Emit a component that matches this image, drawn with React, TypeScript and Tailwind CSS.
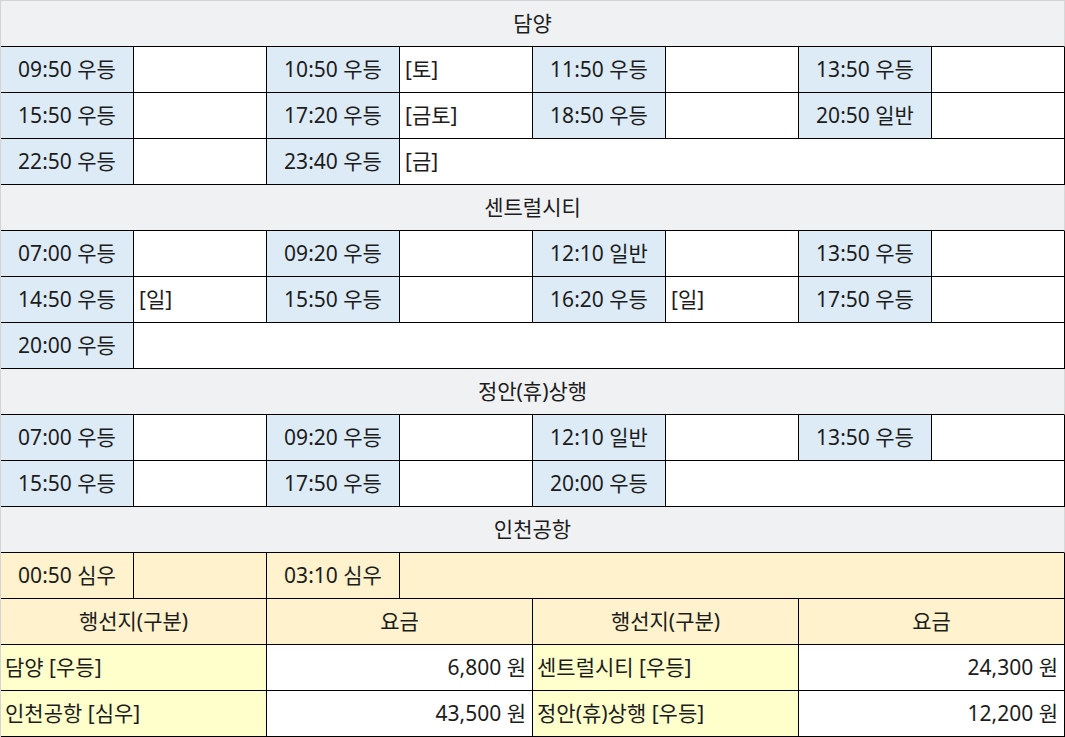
import { FC, ReactNode } from "react";

type Cell = {
  text?: string;
  span?: number;
  kind: "time" | "note" | "peach" | "yellow" | "fare";
};

const spanClass: Record<number, string> = {
  1: "col-span-1",
  2: "col-span-2",
  3: "col-span-3",
  5: "col-span-5",
  7: "col-span-7",
};

const kindClass: Record<Cell["kind"], string> = {
  time: "bg-[#ddebf7] justify-center",
  note: "bg-white justify-start pl-[5px]",
  peach: "bg-[#fff2cc] justify-center",
  yellow: "bg-[#ffffcc] justify-start pl-[4px]",
  fare: "bg-white justify-end pr-[6px]",
};

const t = (text: string): Cell => ({ text, kind: "time" });
const n = (text = "", span = 1): Cell => ({ text, kind: "note", span });

const sections: { title: string; rows: Cell[][] }[] = [
  {
    title: "담양",
    rows: [
      [t("09:50 우등"), n(), t("10:50 우등"), n("[토]"), t("11:50 우등"), n(), t("13:50 우등"), n()],
      [t("15:50 우등"), n(), t("17:20 우등"), n("[금토]"), t("18:50 우등"), n(), t("20:50 일반"), n()],
      [t("22:50 우등"), n(), t("23:40 우등"), n("[금]", 5)],
    ],
  },
  {
    title: "센트럴시티",
    rows: [
      [t("07:00 우등"), n(), t("09:20 우등"), n(), t("12:10 일반"), n(), t("13:50 우등"), n()],
      [t("14:50 우등"), n("[일]"), t("15:50 우등"), n(), t("16:20 우등"), n("[일]"), t("17:50 우등"), n()],
      [t("20:00 우등"), n("", 7)],
    ],
  },
  {
    title: "정안(휴)상행",
    rows: [
      [t("07:00 우등"), n(), t("09:20 우등"), n(), t("12:10 일반"), n(), t("13:50 우등"), n()],
      [t("15:50 우등"), n(), t("17:50 우등"), n(), t("20:00 우등"), n("", 3)],
    ],
  },
  {
    title: "인천공항",
    rows: [
      [
        { text: "00:50 심우", kind: "peach" },
        { kind: "peach" },
        { text: "03:10 심우", kind: "peach" },
        { kind: "peach", span: 5 },
      ],
      [
        { text: "행선지(구분)", kind: "peach", span: 2 },
        { text: "요금", kind: "peach", span: 2 },
        { text: "행선지(구분)", kind: "peach", span: 2 },
        { text: "요금", kind: "peach", span: 2 },
      ],
      [
        { text: "담양 [우등]", kind: "yellow", span: 2 },
        { text: "6,800 원", kind: "fare", span: 2 },
        { text: "센트럴시티 [우등]", kind: "yellow", span: 2 },
        { text: "24,300 원", kind: "fare", span: 2 },
      ],
      [
        { text: "인천공항 [심우]", kind: "yellow", span: 2 },
        { text: "43,500 원", kind: "fare", span: 2 },
        { text: "정안(휴)상행 [우등]", kind: "yellow", span: 2 },
        { text: "12,200 원", kind: "fare", span: 2 },
      ],
    ],
  },
];

const TableCell: FC<{ cell: Cell }> = ({ cell }) => (
  <div
    className={`flex h-[46px] items-center border-r border-b border-black ${spanClass[cell.span ?? 1]} ${kindClass[cell.kind]}`}
  >
    {cell.text}
  </div>
);

const SectionTitle: FC<{ children: ReactNode }> = ({ children }) => (
  <div className="col-span-8 flex h-[46px] items-center justify-center border-r border-b border-r-[#d8d8d8] border-b-black bg-[#f0f1f3]">
    {children}
  </div>
);

const App: FC = () => {
  return (
    <div className="min-h-screen bg-white">
      <div className="grid w-[1065px] grid-cols-[repeat(8,133px)] border-t border-l border-[#d4d4d4] font-['Noto_Sans','Noto_Sans_CJK_KR',sans-serif] text-[21px] leading-none text-[#1c1c1c]">
        {sections.map((section) => (
          <div key={section.title} className="contents">
            <SectionTitle>{section.title}</SectionTitle>
            {section.rows.map((row, i) =>
              row.map((cell, j) => <TableCell key={`${i}-${j}`} cell={cell} />)
            )}
          </div>
        ))}
      </div>
    </div>
  );
};

export default App;
